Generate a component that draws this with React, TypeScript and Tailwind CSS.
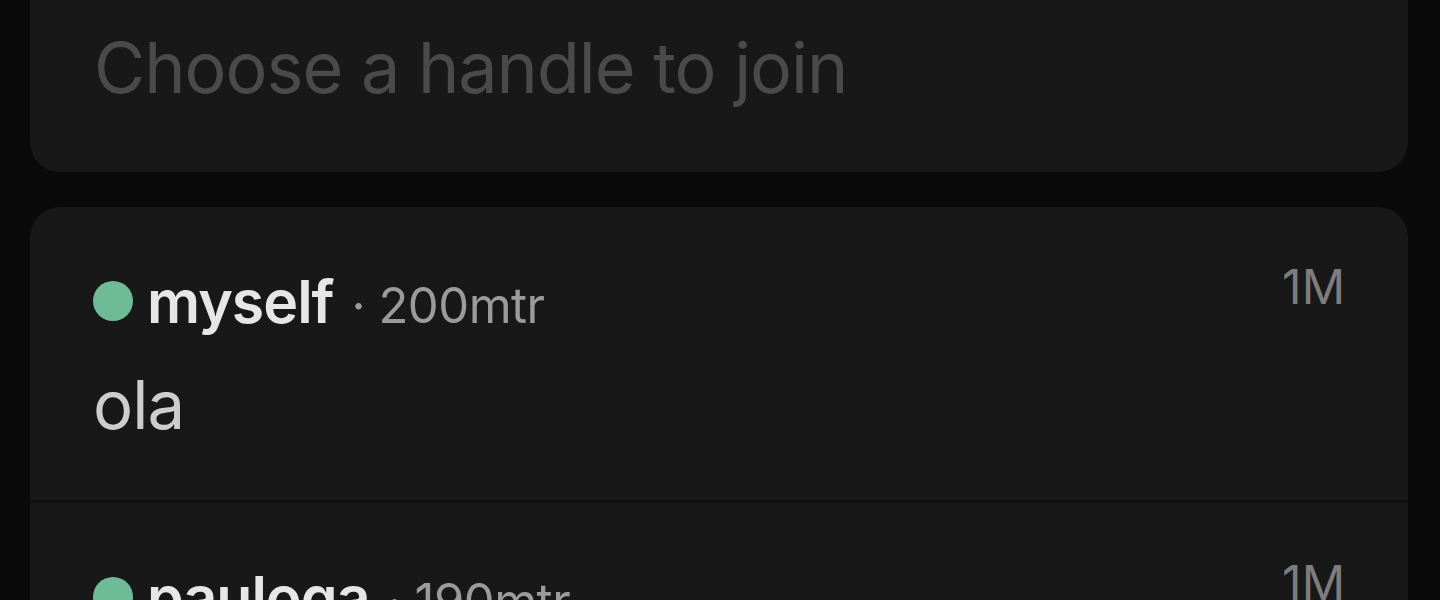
import React from "react";

const font = { fontFamily: "Inter, 'Liberation Sans', sans-serif" };

function Row({ name, dist, msg, top }: { name: string; dist: string; msg?: string; top?: boolean }) {
  return (
    <div className={`flex flex-col px-[63px] pt-[62px] ${top ? "pb-[62px] border-b-[3px] border-[#101010]" : "pb-[40px]"}`}>
      <div className="flex items-start justify-between">
        <div className="flex items-center h-[64px]">
          <span className="w-[40px] h-[40px] rounded-full bg-[#6fbb98] mr-[14px] shrink-0" />
          <span className="text-[59px] font-semibold text-[#e6e6e6] tracking-[-1px] leading-none">{name}</span>
          <span className="text-[49px] text-[#9b9b9b] ml-[18px] leading-none mt-[8px] tracking-[-0.5px]">· {dist}</span>
        </div>
        <span className="text-[48px] text-[#7d7d7d] leading-none -mt-[6px] mr-[0px]">1M</span>
      </div>
      {msg && <div className="text-[67px] text-[#cdcdcd] leading-none mt-[38px] tracking-[-1px]">{msg}</div>}
    </div>
  );
}

export default function App() {
  return (
    <div className="w-[1440px] h-[600px] overflow-hidden bg-[#0a0a0a] px-[30px] pr-[32px]" style={font}>
      <div className="h-[172px] rounded-b-[30px] bg-[#181818] flex items-start px-[64px] pt-[33px]">
        <span className="text-[70px] text-[#4a4a4a] leading-none tracking-[-1px]">Choose a handle to join</span>
      </div>
      <div className="mt-[35px] rounded-t-[30px] bg-[#181818]">
        <Row name="myself" dist="200mtr" msg="ola" top />
        <Row name="pauloga" dist="190mtr" />
      </div>
    </div>
  );
}
